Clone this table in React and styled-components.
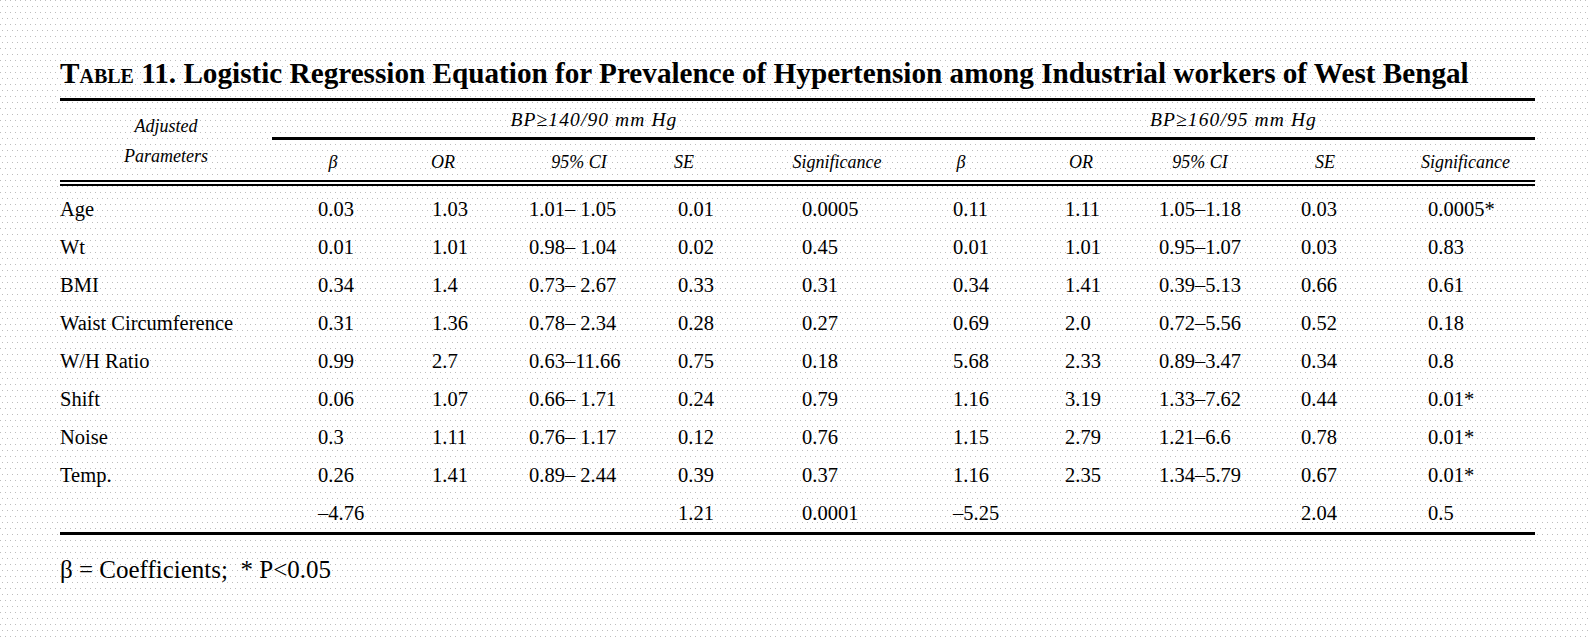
import styled, { createGlobalStyle } from 'styled-components';

const GlobalStyle = createGlobalStyle`
  html, body {
    margin: 0;
  }
  body {
    min-height: 639px;
    background-color: #fff;
    background-image:
      conic-gradient(at 1px 1px, transparent 75%, #bdbdbd 0),
      conic-gradient(at 1px 1px, transparent 75%, #bdbdbd 0);
    background-size: 5px 12px;
    background-position: 0 0, 2px 6px;
    font-family: "Liberation Serif", "Times New Roman", serif;
    color: #000;
  }
`;

// column widths, first one is the parameter names
const COLS = [212, 122, 122, 82, 184, 94, 170, 70, 152, 114, 153];
const template = COLS.map((w) => `${w}px`).join(' ');

// left padding of the figures in each value column
const PADS = [46, 38, 13, 80, 20, 77, 19, 43, 33, 46];
// how far each sub heading sits off its column centre
const SHIFTS = [0, -12, 22, -6, 8, 0, 0, 8, 0, 7];

const Page = styled.div`
  width: 1475px;
  padding: 57px 0 0 60px;
`;

const Title = styled.h1`
  margin: 0 0 9px;
  font-size: 29.2px;
  line-height: 32px;
  font-weight: 700;
  white-space: nowrap;
`;

const Caps = styled.span`
  font-variant: small-caps;
`;

const Head = styled.div`
  display: grid;
  grid-template-columns: ${template};
  grid-template-rows: 39px 46px;
  border-top: 3px solid #000;
  font-style: italic;
  font-size: 18px;
`;

const ParamHead = styled.div`
  grid-row: 1 / 3;
  grid-column: 1;
  display: flex;
  flex-direction: column;
  align-items: center;
  justify-content: center;
  line-height: 30px;
  border-bottom: 6px double #000;
`;

const GroupHead = styled.div`
  grid-column: span 5;
  display: flex;
  align-items: center;
  justify-content: center;
  padding-left: ${(p) => p.$indent}px;
  padding-top: 2px;
  font-size: 19.5px;
  letter-spacing: 1.1px;
  border-bottom: 3px solid #000;
`;

const ColHead = styled.div`
  grid-row: 2;
  display: flex;
  align-items: center;
  justify-content: center;
  padding-top: 4px;
  padding-left: ${(p) => Math.max(0, p.$shift * 2)}px;
  padding-right: ${(p) => Math.max(0, -p.$shift * 2)}px;
  border-bottom: 6px double #000;
  white-space: nowrap;
`;

const Body = styled.div`
  display: grid;
  grid-template-columns: ${template};
  grid-auto-rows: 38px;
  padding-top: 4px;
  border-bottom: 3px solid #000;
  font-size: 20.5px;
`;

const Cell = styled.div`
  display: flex;
  align-items: center;
  padding-left: ${(p) => p.$pad || 0}px;
  white-space: nowrap;
`;

const Note = styled.p`
  margin: 20px 0 0;
  font-size: 25px;
  line-height: 30px;
`;

const subHeads = ['β', 'OR', '95% CI', 'SE', 'Significance'];

const rows = [
  ['Age', '0.03', '1.03', '1.01– 1.05', '0.01', '0.0005', '0.11', '1.11', '1.05–1.18', '0.03', '0.0005*'],
  ['Wt', '0.01', '1.01', '0.98– 1.04', '0.02', '0.45', '0.01', '1.01', '0.95–1.07', '0.03', '0.83'],
  ['BMI', '0.34', '1.4', '0.73– 2.67', '0.33', '0.31', '0.34', '1.41', '0.39–5.13', '0.66', '0.61'],
  ['Waist Circumference', '0.31', '1.36', '0.78– 2.34', '0.28', '0.27', '0.69', '2.0', '0.72–5.56', '0.52', '0.18'],
  ['W/H Ratio', '0.99', '2.7', '0.63–11.66', '0.75', '0.18', '5.68', '2.33', '0.89–3.47', '0.34', '0.8'],
  ['Shift', '0.06', '1.07', '0.66– 1.71', '0.24', '0.79', '1.16', '3.19', '1.33–7.62', '0.44', '0.01*'],
  ['Noise', '0.3', '1.11', '0.76– 1.17', '0.12', '0.76', '1.15', '2.79', '1.21–6.6', '0.78', '0.01*'],
  ['Temp.', '0.26', '1.41', '0.89– 2.44', '0.39', '0.37', '1.16', '2.35', '1.34–5.79', '0.67', '0.01*'],
  ['', '–4.76', '', '', '1.21', '0.0001', '–5.25', '', '', '2.04', '0.5'],
];

export default function App() {
  return (
    <Page>
      <GlobalStyle />
      <Title>
        <Caps>Table</Caps> 11. Logistic Regression Equation for Prevalence of Hypertension among Industrial workers of West Bengal
      </Title>
      <Head>
        <ParamHead>
          <span>Adjusted</span>
          <span>Parameters</span>
        </ParamHead>
        <GroupHead $indent={40}>BP≥140/90 mm Hg</GroupHead>
        <GroupHead $indent={56}>BP≥160/95 mm Hg</GroupHead>
        {[...subHeads, ...subHeads].map((h, i) => (
          <ColHead key={i} $shift={SHIFTS[i]}>
            {h}
          </ColHead>
        ))}
      </Head>
      <Body>
        {rows.map((r, ri) =>
          r.map((v, ci) => (
            <Cell key={`${ri}-${ci}`} $pad={ci === 0 ? 0 : PADS[ci - 1]}>
              {v}
            </Cell>
          ))
        )}
      </Body>
      <Note>β = Coefficients;&nbsp; * P&lt;0.05</Note>
    </Page>
  );
}
